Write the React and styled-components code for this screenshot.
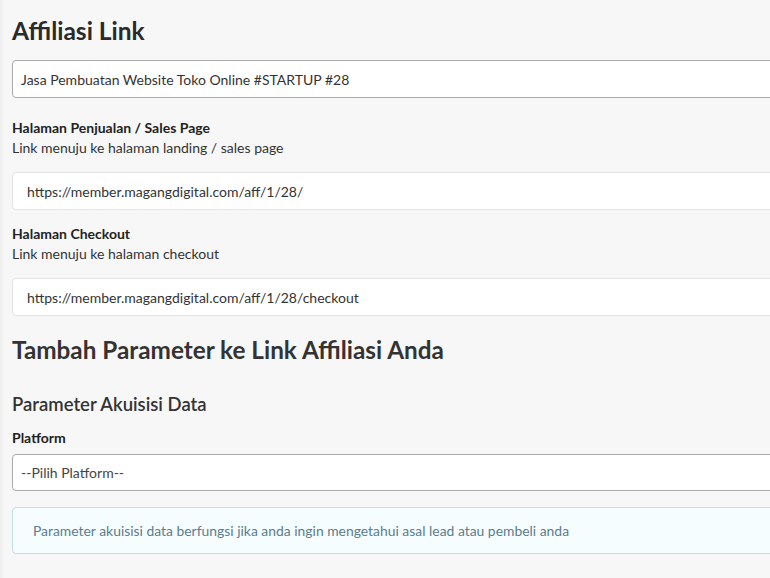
import React from "react";
import styled, { createGlobalStyle } from "styled-components";

const GlobalStyle = createGlobalStyle`
  html, body {
    margin: 0;
    padding: 0;
    background: #f7f7f7;
    overflow: hidden;
  }
  body {
    font-family: Lato, "Open Sans", "Liberation Sans", sans-serif;
    color: #333;
  }
`;

const Page = styled.div`
  min-height: 578px;
  padding: 16px 0 0 12px;
  box-shadow: inset 5px 0 4px -3px rgba(0, 0, 0, 0.05);
`;

const Content = styled.div`
  width: 820px;
`;

const Title = styled.h1`
  margin: 0 0 14px;
  font-size: 24.5px;
  font-weight: 700;
  line-height: 30px;
  color: #2a2a2a;
`;

const SectionTitle = styled.h2`
  margin: 19px 0 0;
  font-size: 24.3px;
  font-weight: 700;
  line-height: 30px;
  color: #333;
`;

const SubTitle = styled.h3`
  margin: 28px 0 0;
  font-size: 18.5px;
  font-weight: 600;
  line-height: 22px;
  color: #333;
`;

const Field = styled.div`
  margin-top: ${(p) => p.$mt || 0}px;
`;

const Label = styled.div`
  font-size: 14px;
  font-weight: 700;
  line-height: 20px;
  color: #222;
`;

const Hint = styled.div`
  font-size: 14px;
  line-height: 20px;
  color: #333;
`;

const Input = styled.input`
  display: block;
  box-sizing: border-box;
  width: 100%;
  height: 38px;
  margin-top: ${(p) => p.$mt || 0}px;
  padding: 0 ${(p) => (p.$plain ? 14 : 8)}px;
  border: 1px solid ${(p) => (p.$plain ? "#e4e4e4" : "#aaa")};
  border-radius: 4px;
  background: #fff;
  font-family: inherit;
  font-size: 14px;
  color: #333;
  outline: none;
`;

const Select = styled.div`
  box-sizing: border-box;
  height: 37px;
  margin-top: 6px;
  padding: 0 8px;
  display: flex;
  align-items: center;
  border: 1px solid #aaa;
  border-radius: 4px;
  background: #fff;
  font-size: 14px;
  color: #444;
`;

const Alert = styled.div`
  box-sizing: border-box;
  height: 47px;
  margin-top: 16px;
  padding: 0 20px;
  display: flex;
  align-items: center;
  border: 1px solid #bfe0e6;
  border-radius: 4px;
  background: #f6fdfe;
  font-size: 13.9px;
  color: #5b7d8c;
`;

export default function App() {
  return (
    <>
      <GlobalStyle />
      <Page>
        <Content>
          <Title>Affiliasi Link</Title>
          <Input readOnly value="Jasa Pembuatan Website Toko Online #STARTUP #28" />

          <Field $mt={20}>
            <Label>Halaman Penjualan / Sales Page</Label>
            <Hint>Link menuju ke halaman landing / sales page</Hint>
            <Input $plain $mt={14} readOnly value="https://member.magangdigital.com/aff/1/28/" />
          </Field>

          <Field $mt={14}>
            <Label>Halaman Checkout</Label>
            <Hint>Link menuju ke halaman checkout</Hint>
            <Input $plain $mt={14} readOnly value="https://member.magangdigital.com/aff/1/28/checkout" />
          </Field>

          <SectionTitle>Tambah Parameter ke Link Affiliasi Anda</SectionTitle>
          <SubTitle>Parameter Akuisisi Data</SubTitle>

          <Field $mt={13}>
            <Label>Platform</Label>
            <Select>--Pilih Platform--</Select>
          </Field>

          <Alert>Parameter akuisisi data berfungsi jika anda ingin mengetahui asal lead atau pembeli anda</Alert>
        </Content>
      </Page>
    </>
  );
}
